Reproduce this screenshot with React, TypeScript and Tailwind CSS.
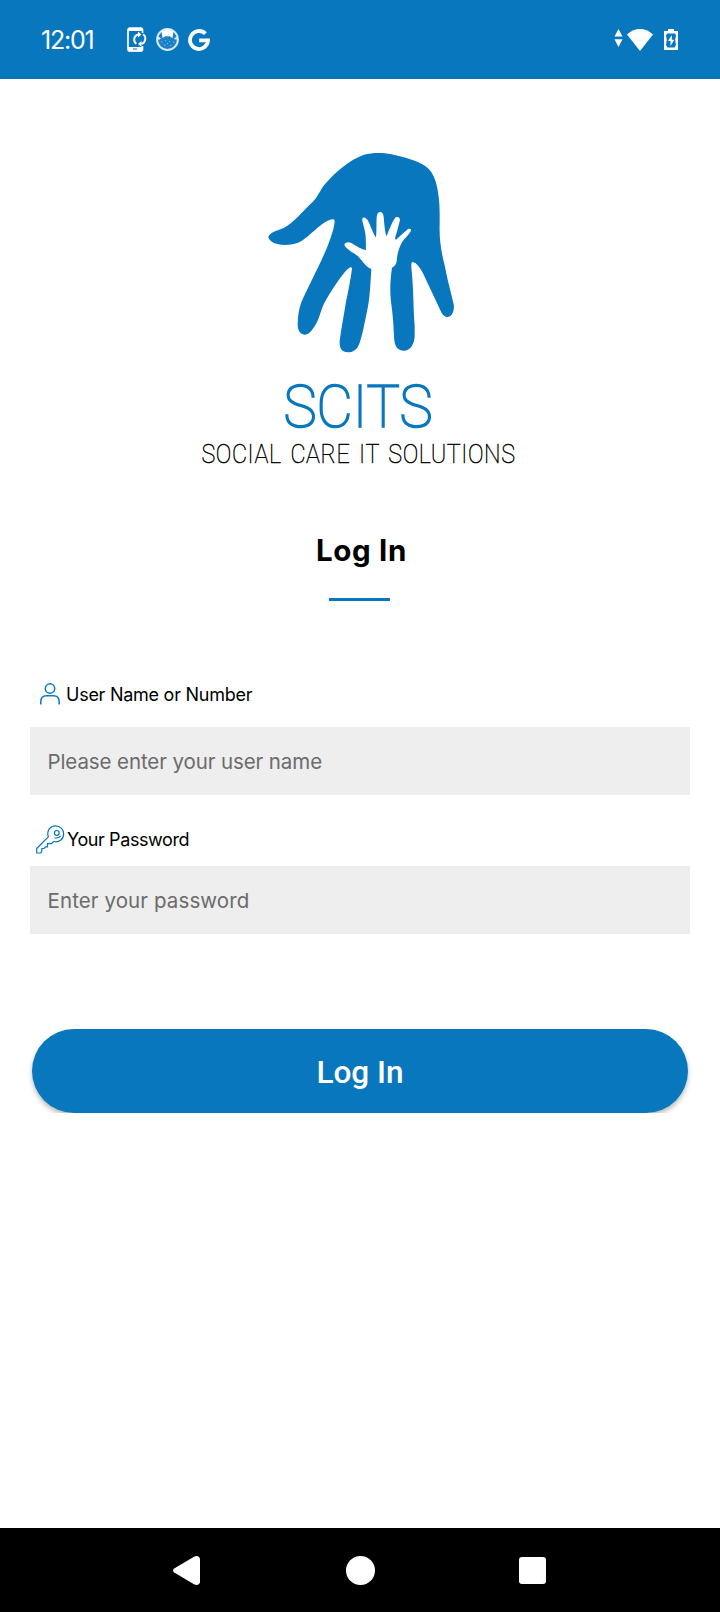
import { useState } from 'react';

function StatusBar() {
  return (
    <header className="flex h-[79px] shrink-0 items-center bg-[#0977be] pl-[41px] pr-[42px] text-white">
      <span className="w-[86px] whitespace-nowrap pt-[2px] text-[25px] leading-none tracking-[-1.200px]">12:01</span>
      <svg className="h-[26px] w-[20px]" viewBox="0 0 20 26" fill="none">
        <path d="M15.500 6V2.600A1.600 1.600 0 0 0 14 1H3a2 2 0 0 0-2 2v19a2 2 0 0 0 2 2h11a1.600 1.600 0 0 0 1.500-1.600V19" stroke="#fff" strokeWidth="1.700" />
        <path d="M1 1h14v3H1zM1 20h14v4.500H2.500L1 23z" fill="#fff" />
        <path d="M6 22h4" stroke="#0977be" strokeWidth="1" />
        <path d="M11 7.500C6.500 9 6 14.500 9.300 16.800M14.500 17c4.500-1.500 5-7.500 1.700-9.800" stroke="#fff" strokeWidth="1.900" />
        <path d="M11 4.500v6l3.500-3zM14.500 14v6l-3.500-3z" fill="#fff" />
      </svg>
      <svg className="ml-[9px] h-[23px] w-[23px]" viewBox="0 0 23 23">
        <circle cx="11.500" cy="11.500" r="10.400" fill="#1c82c4" stroke="#d7eaf7" strokeWidth="2" />
        <path d="M5.500 3.500L11.500 1l6 2.500-1 6.500-3-1.800h-4L6.500 10zM2 8.500l3 2-2.500 1.500zM21 8.500l-3 2 2.500 1.500z" fill="#fff" />
        <path d="M5 14h1.500M9 12.500h1M13 13.500h1M17 14h1.500M8 17h1.500M14 17.500h1.500M11 15.500h1" stroke="#7bb7de" strokeWidth="1" />
      </svg>
      <svg className="ml-[9px] h-[22px] w-[22px]" viewBox="0 0 22 22" fill="none">
        <path d="M17.400 4.700A9 9 0 1 0 20 11.300H11.200" stroke="#fff" strokeWidth="3.800" />
      </svg>
      <svg className="ml-auto h-[18px] w-[9px] -translate-y-[2px]" viewBox="0 0 9 18" fill="#fff">
        <path d="M4.500 0L8.500 7.500H.5zM.5 10.300h8L4.500 18z" />
      </svg>
      <svg className="ml-[4px] h-[22px] w-[26px]" viewBox="0 0 26 22" fill="#fff">
        <path d="M0 5.500Q13-5.400 26 5.500L13 22z" />
      </svg>
      <svg className="ml-[11px] h-[21px] w-[14px]" viewBox="0 0 14 21">
        <path d="M0 2h4V0h6v2h4v19H0z" fill="#fff" />
        <path d="M3 4.500h8l1 2-.8 4.500.8 5-1.500 2.500h-7L2 16l.8-5L2 6.500z" fill="#0977be" />
        <path d="M7.800 6L4 12h2.500v5L10.300 10.700H7.800z" fill="#fff" />
      </svg>
    </header>
  );
}

function Logo() {
  return (
    <svg className="block h-[350px] w-full overflow-visible" viewBox="30 140 660 350" role="img" aria-label="SCITS Social Care IT Solutions">
      <g transform="translate(250 140) scale(.33333)">
        <path
          fill="#0977be"
          d="M55 291C60 276 80 273 101 264C132 248 155 217 190 184C205 168 209 153 222 136C252 98 300 59 342 44C369 37 400 38 424 43C458 50 492 60 516 72C550 90 559 123 564 157C570 190 569 227 569 252C567 304 576 345 585 380C593 423 603 456 611 493C614 512 606 531 592 531C577 531 572 512 564 496L526 415C514 386 499 367 488 366C482 365 484 383 486 402C491 463 490 508 494 557V588C493 613 481 632 462 632C442 632 433 618 432 590C431 560 428 520 423 485C419 450 421 417 426 383C434 378 439 374 440 363C442 340 447 324 456 307C462 296 477 284 483 272C483 265 476 265 470 271C460 278 447 293 438 299C433 298 437 286 440 278L449 244C452 234 445 228 437 232C427 244 419 267 410 288C405 281 403 252 401 231C400 221 396 216 391 216C384 216 381 222 380 231C379 252 380 275 378 292C373 289 364 263 356 246C350 233 339 228 337 237C336 245 343 262 345 275C349 292 347 313 348 330C336 329 317 317 304 309C294 304 284 307 283 314C285 324 305 335 318 344C335 355 343 379 364 387C361 433 360 478 350 519C344 548 337 587 328 611C321 629 309 637 293 637C275 637 268 624 269 604C273 567 282 525 288 485C296 449 303 412 306 384C303 378 295 385 287 393C262 423 240 458 223 489C211 512 209 538 193 560C182 576 176 583 164 584C150 584 143 570 143 553C143 532 146 509 154 487C174 441 211 372 232 320C243 291 253 264 254 242C252 235 242 238 230 244C203 259 180 287 156 302C136 314 106 317 85 313C69 309 57 302 55 291Z"
        />
      </g>
      <text x="283.500" y="427" textLength="149" lengthAdjust="spacingAndGlyphs" className="fill-[#0977be] font-['Roboto',sans-serif] text-[58.500px] font-thin" stroke="#0977be" strokeWidth="1.700">SCITS</text>
      <text x="201.500" y="463" textLength="314" lengthAdjust="spacingAndGlyphs" className="fill-black font-['Roboto',sans-serif] text-[25.500px] font-thin tracking-[0.6px] [word-spacing:3px]" stroke="#000" strokeWidth=".45">SOCIAL CARE IT SOLUTIONS</text>
    </svg>
  );
}

function UserIcon() {
  return (
    <svg className="h-[22px] w-[20px]" viewBox="0 0 20 22" fill="none" stroke="#0977be" strokeWidth="1.500">
      <circle cx="10" cy="5.500" r="4.700" />
      <path d="M.8 21.500V19C.8 15 3 12.800 6.500 12.800h7c3.500 0 5.700 2.200 5.700 6.200v2.500" />
    </svg>
  );
}

function KeyIcon() {
  return (
    <svg className="h-[29px] w-[29px]" viewBox="0 0 29 29" fill="none" stroke="#0977be" strokeWidth="1.200">
      <path d="M.7 23.500L12.300 11.800C10.500 6 14 .8 19.500.8c4.700 0 8.100 3.600 8.100 8.100 0 5.600-4.600 9-10 7.600L15.500 18.700h-4v3.100H9.500L8 23.500H5.800V26L4.800 28H.7z" />
      <circle cx="20.800" cy="7.900" r="2.400" />
      <path d="M18.500 12.700c2.300.7 4.500 0 6-1.800" />
    </svg>
  );
}

export default function App() {
  const [user, setUser] = useState('');
  const [password, setPassword] = useState('');
  return (
    <div className="flex h-[1612px] w-[720px] flex-col bg-white font-['Inter',sans-serif] text-black">
      <StatusBar />
      <main className="flex flex-1 flex-col px-[30px] pt-[61px]">
        <Logo />
        <h1 className="ml-[3px] mt-[44px] h-[32px] text-center text-[29.500px] font-bold leading-[32px] tracking-[0.7px]">Log In</h1>
        <div className="ml-[299px] mt-[32px] h-[3px] w-[61px] bg-[#0977be]" />

        <label htmlFor="user" className="mt-[82px] flex h-[22px] items-center pl-[10px]">
          <UserIcon />
          <span className="ml-[6px] whitespace-nowrap pt-[2px] text-[18px] leading-[22px] tracking-[-0.260px]">User Name or Number</span>
        </label>
        <input
          id="user"
          value={user}
          onChange={(e) => setUser(e.target.value)}
          placeholder="Please enter your user name"
          className="mt-[22px] h-[68px] w-full bg-[#eeeeee] pl-[17.500px] pt-[1px] text-[20.500px] tracking-[-0.1px] outline-none placeholder:text-[#6b6b6b]"
        />
        <label htmlFor="password" className="mt-[30px] flex h-[29px] items-center pl-[6px]">
          <KeyIcon />
          <span className="ml-[2px] whitespace-nowrap text-[18px] leading-[22px] tracking-[-0.400px]">Your Password</span>
        </label>
        <input
          id="password"
          type="password"
          value={password}
          onChange={(e) => setPassword(e.target.value)}
          placeholder="Enter your password"
          className="mt-[12px] h-[68px] w-full bg-[#eeeeee] pl-[17.500px] pt-[1px] text-[20.500px] tracking-[0.1px] outline-none placeholder:text-[#6b6b6b]"
        />
        <div className="-mx-[10px] mt-[95px] h-[84px] overflow-hidden px-[12px]">
          <button className="h-[84px] w-full rounded-full bg-[#0977be] pt-[4px] font-['Roboto',sans-serif] text-[31.500px] font-medium leading-none text-white shadow-[0_3px_5px_rgba(0,0,0,0.28)]">
            Log In
          </button>
        </div>
      </main>
      <nav className="flex h-[84px] shrink-0 items-center bg-black pl-[173px] pt-[1px]">
        <svg className="h-[29px] w-[27px]" viewBox="0 0 27 29" fill="#fff">
          <path d="M1.200 12.500L21 .7C24-.8 27 .5 27 3.500v22c0 3-3 4.300-6 2.800L1.200 16.500q-2.400-2 0-4z" />
        </svg>
        <div className="ml-[146px] h-[29px] w-[29px] rounded-full bg-white" />
        <div className="ml-[144px] h-[27px] w-[27px] rounded-[3px] bg-white" />
      </nav>
    </div>
  );
}
